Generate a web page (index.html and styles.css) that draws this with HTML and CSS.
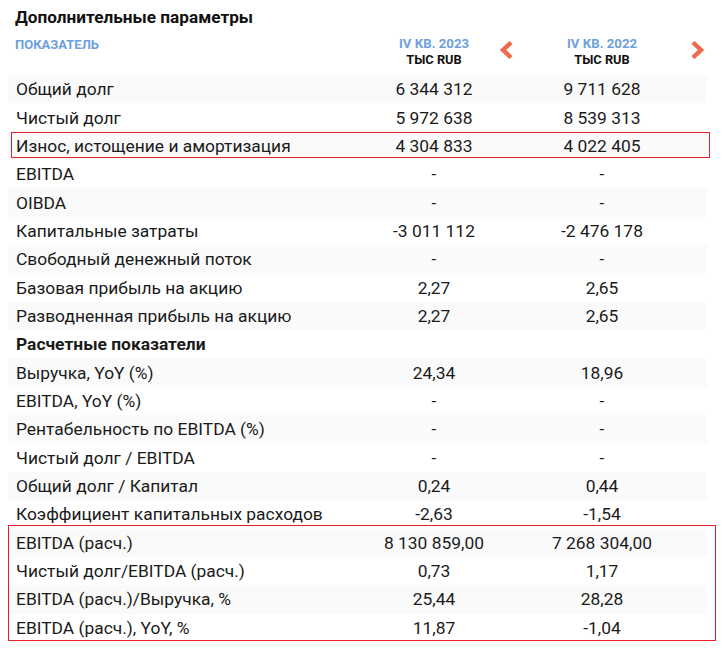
FILE: index.html
```html
<!DOCTYPE html>
<html lang="ru">
<head>
<meta charset="utf-8">
<link rel="stylesheet" href="styles.css">
</head>
<body>
<div class="panel">
  <h2 class="title">Дополнительные параметры</h2>
  <div class="head">
    <div class="hlabel">ПОКАЗАТЕЛЬ</div>
    <div class="hcol">
      <div class="period">IV КВ. 2023</div>
      <div class="unit">ТЫС RUB</div>
      <svg class="arrow arrow-left" width="16" height="18" viewBox="0 0 16 18"><path d="M13 1.5 L5 9 L13 16.5" fill="none" stroke="#ef6a4a" stroke-width="4.4"/></svg>
    </div>
    <div class="hcol">
      <div class="period">IV КВ. 2022</div>
      <div class="unit">ТЫС RUB</div>
      <svg class="arrow arrow-right" width="16" height="18" viewBox="0 0 16 18"><path d="M3 1.5 L11 9 L3 16.5" fill="none" stroke="#ef6a4a" stroke-width="4.4"/></svg>
    </div>
  </div>
  <div class="table">
    <div class="row"><div class="lbl">Общий долг</div><div class="val">6 344 312</div><div class="val">9 711 628</div></div>
    <div class="row"><div class="lbl">Чистый долг</div><div class="val">5 972 638</div><div class="val">8 539 313</div></div>
    <div class="row"><div class="lbl">Износ, истощение и амортизация</div><div class="val">4 304 833</div><div class="val">4 022 405</div></div>
    <div class="row"><div class="lbl">EBITDA</div><div class="val">-</div><div class="val">-</div></div>
    <div class="row"><div class="lbl">OIBDA</div><div class="val">-</div><div class="val">-</div></div>
    <div class="row"><div class="lbl">Капитальные затраты</div><div class="val">-3 011 112</div><div class="val">-2 476 178</div></div>
    <div class="row"><div class="lbl">Свободный денежный поток</div><div class="val">-</div><div class="val">-</div></div>
    <div class="row"><div class="lbl">Базовая прибыль на акцию</div><div class="val">2,27</div><div class="val">2,65</div></div>
    <div class="row"><div class="lbl">Разводненная прибыль на акцию</div><div class="val">2,27</div><div class="val">2,65</div></div>
    <div class="row"><div class="lbl section">Расчетные показатели</div><div class="val"></div><div class="val"></div></div>
    <div class="row"><div class="lbl">Выручка, YoY (%)</div><div class="val">24,34</div><div class="val">18,96</div></div>
    <div class="row"><div class="lbl">EBITDA, YoY (%)</div><div class="val">-</div><div class="val">-</div></div>
    <div class="row"><div class="lbl">Рентабельность по EBITDA (%)</div><div class="val">-</div><div class="val">-</div></div>
    <div class="row"><div class="lbl">Чистый долг / EBITDA</div><div class="val">-</div><div class="val">-</div></div>
    <div class="row"><div class="lbl">Общий долг / Капитал</div><div class="val">0,24</div><div class="val">0,44</div></div>
    <div class="row"><div class="lbl">Коэффициент капитальных расходов</div><div class="val">-2,63</div><div class="val">-1,54</div></div>
    <div class="row"><div class="lbl">EBITDA (расч.)</div><div class="val">8 130 859,00</div><div class="val">7 268 304,00</div></div>
    <div class="row"><div class="lbl">Чистый долг/EBITDA (расч.)</div><div class="val">0,73</div><div class="val">1,17</div></div>
    <div class="row"><div class="lbl">EBITDA (расч.)/Выручка, %</div><div class="val">25,44</div><div class="val">28,28</div></div>
    <div class="row"><div class="lbl">EBITDA (расч.), YoY, %</div><div class="val">11,87</div><div class="val">-1,04</div></div>
    <div class="row"><div class="lbl"></div><div class="val"></div><div class="val"></div></div>
  </div>
  <div class="mark mark-1"></div>
  <div class="mark mark-2"></div>
</div>
</body>
</html>
```

FILE: styles.css
```css
html, body {
  margin: 0;
  padding: 0;
  background: #ffffff;
  overflow: hidden;
}
body {
  font-family: Roboto, "Liberation Sans", sans-serif;
  color: #1a1a1a;
}
.panel {
  position: relative;
  padding: 0 15px 0 8px;
  width: 699px;
}
.title {
  margin: 0;
  padding: 6px 0 0 7px;
  height: 24px;
  font-size: 17.2px;
  font-weight: 700;
  line-height: 22px;
  color: #111111;
}
.head {
  display: grid;
  grid-template-columns: 342px 168px 168px;
  height: 45px;
}
.hlabel {
  padding: 7px 0 0 7px;
  font-size: 13px;
  font-weight: 700;
  color: #6e9fdc;
}
.hcol {
  position: relative;
  text-align: center;
  padding-top: 6px;
}
.period {
  font-size: 13.2px;
  font-weight: 700;
  line-height: 16px;
  color: #6e9fdc;
}
.unit {
  font-size: 12.8px;
  font-weight: 700;
  line-height: 16px;
  color: #111111;
}
.arrow {
  position: absolute;
  top: 11px;
}
.arrow-left { right: 4px; }
.arrow-right { right: -20px; }
.table {
  display: flex;
  flex-direction: column;
}
.row {
  display: grid;
  grid-template-columns: 342px 168px 168px;
  height: 28.35px;
  align-items: center;
  font-size: 17.4px;
  line-height: 20px;
}
.row:nth-child(odd) {
  background: #fafafa;
}
.lbl {
  padding-left: 8px;
  white-space: nowrap;
}
.lbl.section {
  font-weight: 700;
}
.val {
  text-align: center;
}
.mark {
  position: absolute;
  border: 1px solid #e8202a;
  pointer-events: none;
}
.mark-1 {
  left: 11px;
  top: 132px;
  width: 697px;
  height: 24px;
}
.mark-2 {
  left: 8px;
  top: 525px;
  width: 706px;
  height: 114px;
}
```
